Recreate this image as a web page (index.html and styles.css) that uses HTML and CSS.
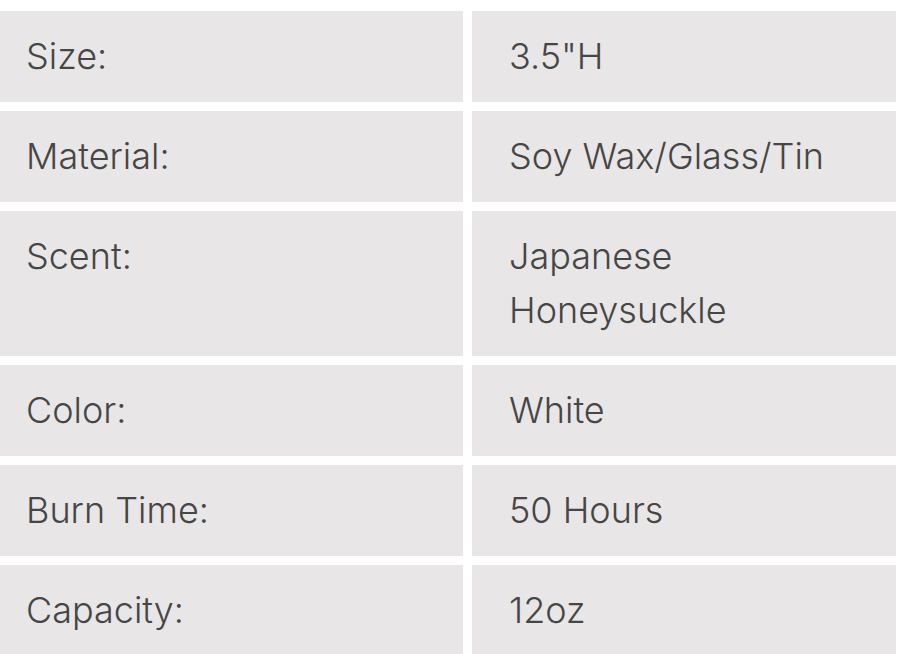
FILE: index.html
```html
<!DOCTYPE html>
<html>
<head>
<meta charset="utf-8">
<link rel="stylesheet" href="styles.css">
</head>
<body>
<div class="specs">
  <div class="cell label">Size:</div><div class="cell value">3.5"H</div>
  <div class="cell label">Material:</div><div class="cell value">Soy Wax/Glass/Tin</div>
  <div class="cell label">Scent:</div><div class="cell value">Japanese<br>Honeysuckle</div>
  <div class="cell label">Color:</div><div class="cell value">White</div>
  <div class="cell label">Burn Time:</div><div class="cell value">50 Hours</div>
  <div class="cell label">Capacity:</div><div class="cell value">12oz</div>
</div>
</body>
</html>
```
FILE: styles.css
```css
html, body {
  margin: 0;
  padding: 0;
  background: #ffffff;
}
body {
  font-family: Inter, "Noto Sans", sans-serif;
  color: #464646;
  overflow: hidden;
}
.specs {
  display: grid;
  grid-template-columns: 463px 424px;
  column-gap: 9px;
  row-gap: 9px;
  padding-top: 11px;
}
.cell {
  background: #e8e6e7;
  font-size: 36px;
  font-weight: 300;
  line-height: 54px;
  padding: 18px 0 19px;
}
.label {
  padding-left: 26px;
}
.value {
  padding-left: 37px;
}
```
